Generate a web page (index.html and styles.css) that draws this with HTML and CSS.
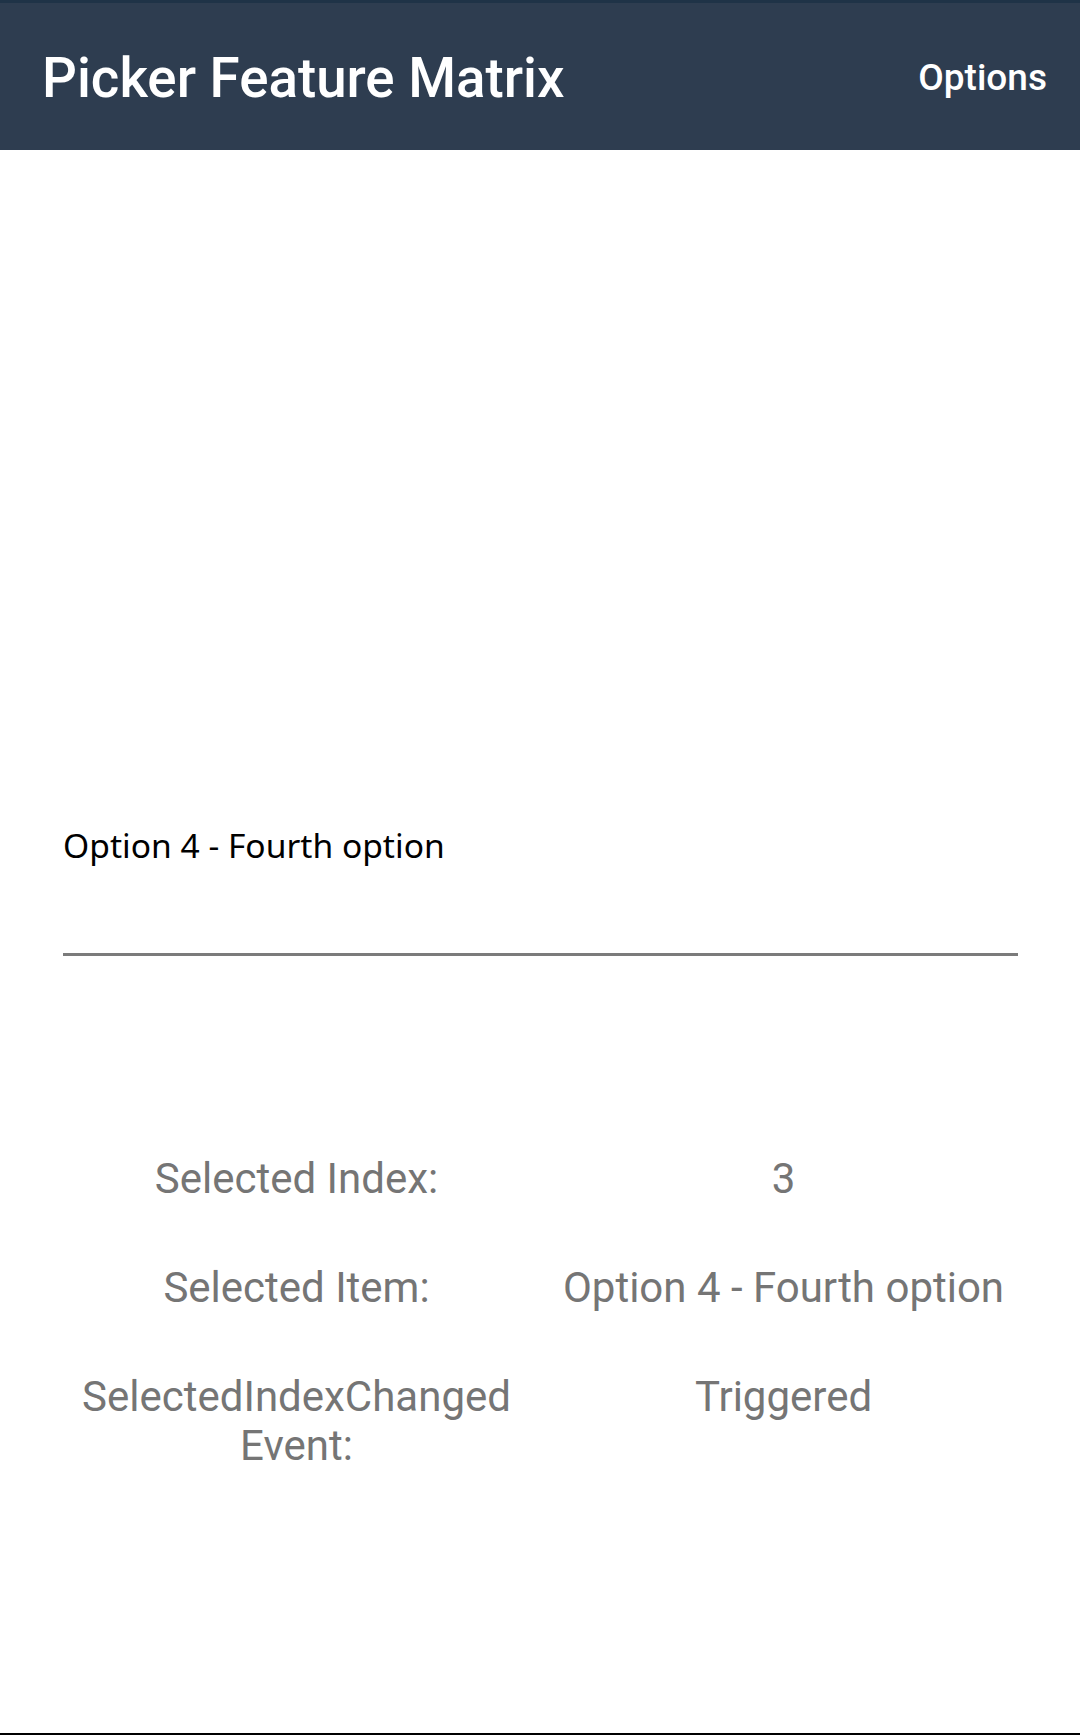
FILE: index.html
```html
<!DOCTYPE html>
<html>
<head>
<meta charset="utf-8">
<link rel="stylesheet" href="styles.css">
</head>
<body>
<div class="screen">
  <header class="appbar">
    <h1 class="title">Picker Feature Matrix</h1>
    <span class="action">Options</span>
  </header>
  <main class="content">
    <div class="picker"><span class="picker-text">Option 4 - Fourth option</span></div>
    <div class="matrix">
      <div class="cell label">Selected Index:</div>
      <div class="cell value">3</div>
      <div class="cell label">Selected Item:</div>
      <div class="cell value">Option 4 - Fourth option</div>
      <div class="cell label">SelectedIndexChanged Event:</div>
      <div class="cell value">Triggered</div>
    </div>
  </main>
  <div class="bottom-edge"></div>
</div>
</body>
</html>
```

FILE: styles.css
```css
html, body {
  margin: 0;
  padding: 0;
  background: #ffffff;
}
.screen {
  width: 1080px;
  height: 1735px;
  display: flex;
  flex-direction: column;
  font-family: Roboto, "Liberation Sans", sans-serif;
  overflow: hidden;
}
.appbar {
  height: 147px;
  border-top: 3px solid #1f3347;
  background: #2e3d50;
  display: flex;
  align-items: center;
  justify-content: space-between;
  padding: 0 33px 0 42px;
  flex-shrink: 0;
}
.title {
  margin: 0;
  font-size: 54.7px;
  font-weight: 500;
  color: #ffffff;
  line-height: 60px;
  padding-top: 2px;
}
.action {
  font-size: 37px;
  font-weight: 500;
  color: #ffffff;
  padding-top: 2px;
}
.content {
  flex: 1;
}
.picker {
  margin: 667px 62px 0 63px;
  padding-bottom: 80px;
  border-bottom: 3px solid #7b7b7b;
}
.picker-text {
  display: block;
  font-family: "Noto Sans", "Open Sans", sans-serif;
  font-size: 33.6px;
  line-height: 56px;
  color: #000000;
}
.matrix {
  margin: 198px 53px 0 53px;
  display: grid;
  grid-template-columns: 1fr 1fr;
  row-gap: 60px;
}
.cell {
  text-align: center;
  font-size: 42px;
  line-height: 49px;
  color: #757575;
}
.bottom-edge {
  height: 2px;
  background: #000000;
  flex-shrink: 0;
}
```
